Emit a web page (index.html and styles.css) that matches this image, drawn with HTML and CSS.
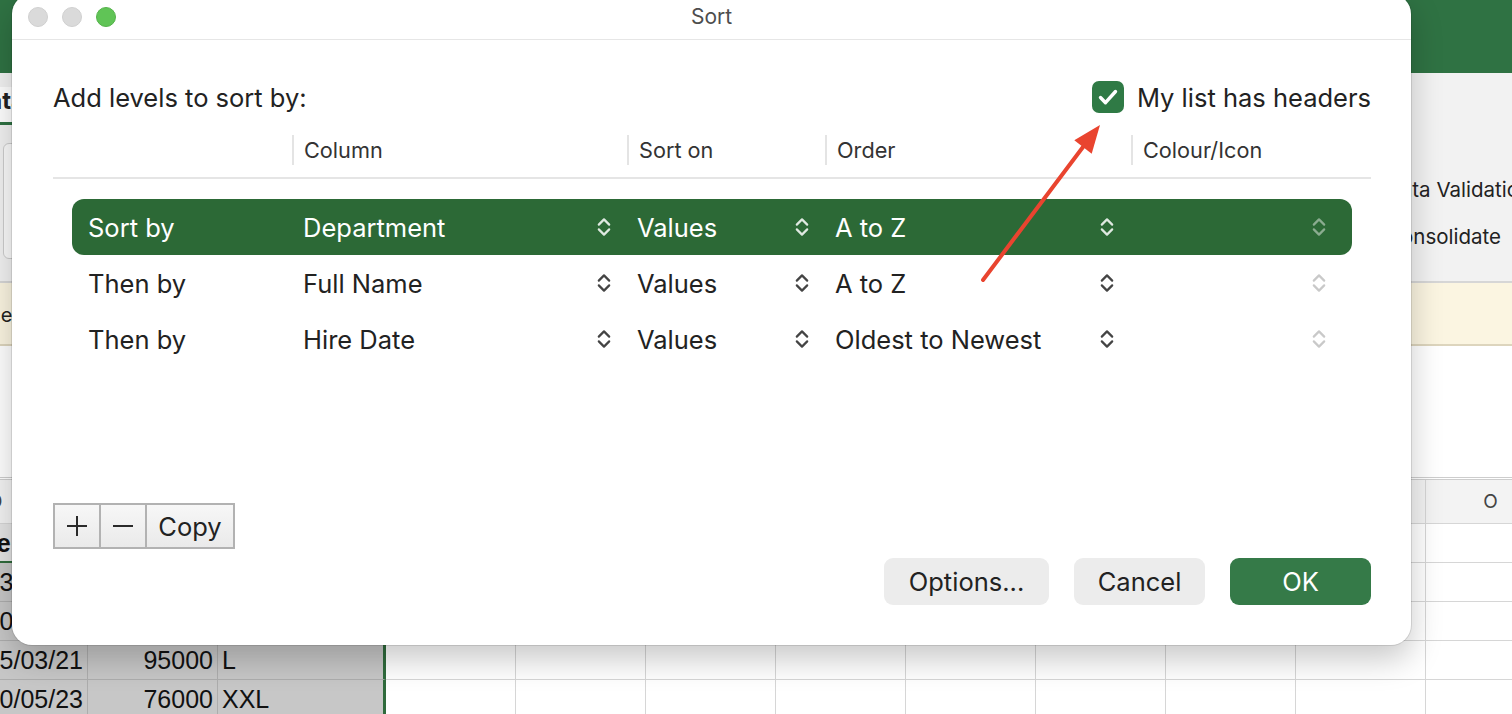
FILE: index.html
```html
<!DOCTYPE html>
<html lang="en">
  <head>
    <meta charset="UTF-8" />
    <meta name="viewport" content="width=device-width, initial-scale=1.0" />
    <title>Sort</title>
    <link rel="stylesheet" href="styles.css">
  </head>
  <body>
    <!-- workbook behind the dialog -->
    <div class="excel">
      <div class="xl-titlebar"></div>
      <div class="xl-tabs"><span class="xl-tab">Data</span></div>
      <div class="xl-ribbon">
        <div class="xl-gallery"></div>
        <div class="xl-group">
          <span>Data Validation</span>
          <span>Consolidate</span>
        </div>
      </div>
      <div class="xl-msgbar"><span>The workbook has links</span></div>
      <div class="xl-formula"></div>
      <div class="xl-sheet">
        <div class="xl-row head">
          <span>D</span><span>E</span><span>F</span><span>G</span><span>H</span><span>I</span>
          <span>J</span><span>K</span><span>L</span><span>M</span><span>N</span><span>O</span>
        </div>
        <div class="xl-row">
          <span class="sel bold under">Hire Date</span><span class="sel bold under">Salary</span><span class="sel bold under edge">Size</span>
          <span></span><span></span><span></span><span></span><span></span><span></span><span></span><span></span><span></span>
        </div>
        <div class="xl-row">
          <span class="sel num">13/06/18</span><span class="sel num">82000</span><span class="sel edge">M</span>
          <span></span><span></span><span></span><span></span><span></span><span></span><span></span><span></span><span></span>
        </div>
        <div class="xl-row">
          <span class="sel num">10/09/19</span><span class="sel num">64000</span><span class="sel edge">S</span>
          <span></span><span></span><span></span><span></span><span></span><span></span><span></span><span></span><span></span>
        </div>
        <div class="xl-row">
          <span class="sel num">15/03/21</span><span class="sel num">95000</span><span class="sel edge">L</span>
          <span></span><span></span><span></span><span></span><span></span><span></span><span></span><span></span><span></span>
        </div>
        <div class="xl-row">
          <span class="sel num">10/05/23</span><span class="sel num">76000</span><span class="sel edge">XXL</span>
          <span></span><span></span><span></span><span></span><span></span><span></span><span></span><span></span><span></span>
        </div>
      </div>
    </div>

    <!-- sort dialog -->
    <div class="dialog">
      <div class="dlg-titlebar">
        <div class="lights">
          <span class="light"></span>
          <span class="light"></span>
          <span class="light zoom"></span>
        </div>
        <div class="dlg-title">Sort</div>
        <div></div>
      </div>

      <div class="dlg-body">
        <div class="dlg-top">
          <span class="dlg-label">Add levels to sort by:</span>
          <label class="check">
            <span class="check-box">
              <svg width="32" height="32" viewBox="0 0 32 32"><path d="M8.5 16.5l5 5.2L23.5 10.5" fill="none" stroke="#fff" stroke-width="3.4" stroke-linecap="round" stroke-linejoin="round"/></svg>
            </span>
            My list has headers
          </label>
        </div>

        <div class="col-heads">
          <span></span>
          <span>Column</span>
          <span>Sort on</span>
          <span>Order</span>
          <span>Colour/Icon</span>
        </div>
        <div class="rule"></div>

        <div class="levels">
          <div class="level active">
            <span class="level-name">Sort by</span>
            <span class="popup">Department <svg class="chev" width="14" height="22" viewBox="0 0 14 22"><path d="M1.8 8.6L7 3.4l5.2 5.2M1.8 13.4L7 18.6l5.2-5.2"/></svg></span>
            <span class="popup">Values <svg class="chev" width="14" height="22" viewBox="0 0 14 22"><path d="M1.8 8.6L7 3.4l5.2 5.2M1.8 13.4L7 18.6l5.2-5.2"/></svg></span>
            <span class="popup order">A to Z <svg class="chev" width="14" height="22" viewBox="0 0 14 22"><path d="M1.8 8.6L7 3.4l5.2 5.2M1.8 13.4L7 18.6l5.2-5.2"/></svg></span>
            <span class="popup dim"><svg class="chev" width="14" height="22" viewBox="0 0 14 22"><path d="M1.8 8.6L7 3.4l5.2 5.2M1.8 13.4L7 18.6l5.2-5.2"/></svg></span>
          </div>
          <div class="level">
            <span class="level-name">Then by</span>
            <span class="popup">Full Name <svg class="chev" width="14" height="22" viewBox="0 0 14 22"><path d="M1.8 8.6L7 3.4l5.2 5.2M1.8 13.4L7 18.6l5.2-5.2"/></svg></span>
            <span class="popup">Values <svg class="chev" width="14" height="22" viewBox="0 0 14 22"><path d="M1.8 8.6L7 3.4l5.2 5.2M1.8 13.4L7 18.6l5.2-5.2"/></svg></span>
            <span class="popup order">A to Z <svg class="chev" width="14" height="22" viewBox="0 0 14 22"><path d="M1.8 8.6L7 3.4l5.2 5.2M1.8 13.4L7 18.6l5.2-5.2"/></svg></span>
            <span class="popup dim"><svg class="chev" width="14" height="22" viewBox="0 0 14 22"><path d="M1.8 8.6L7 3.4l5.2 5.2M1.8 13.4L7 18.6l5.2-5.2"/></svg></span>
          </div>
          <div class="level">
            <span class="level-name">Then by</span>
            <span class="popup">Hire Date <svg class="chev" width="14" height="22" viewBox="0 0 14 22"><path d="M1.8 8.6L7 3.4l5.2 5.2M1.8 13.4L7 18.6l5.2-5.2"/></svg></span>
            <span class="popup">Values <svg class="chev" width="14" height="22" viewBox="0 0 14 22"><path d="M1.8 8.6L7 3.4l5.2 5.2M1.8 13.4L7 18.6l5.2-5.2"/></svg></span>
            <span class="popup order">Oldest to Newest <svg class="chev" width="14" height="22" viewBox="0 0 14 22"><path d="M1.8 8.6L7 3.4l5.2 5.2M1.8 13.4L7 18.6l5.2-5.2"/></svg></span>
            <span class="popup dim"><svg class="chev" width="14" height="22" viewBox="0 0 14 22"><path d="M1.8 8.6L7 3.4l5.2 5.2M1.8 13.4L7 18.6l5.2-5.2"/></svg></span>
          </div>
        </div>

        <div class="dlg-footer">
          <div class="seg">
            <button class="seg-btn plus"><svg width="22" height="22" viewBox="0 0 22 22"><path d="M11 1v20M1 11h20" stroke="#2a2a2a" stroke-width="2"/></svg></button>
            <button class="seg-btn minus"><svg width="22" height="22" viewBox="0 0 22 22"><path d="M1 11h20" stroke="#2a2a2a" stroke-width="2"/></svg></button>
            <button class="seg-btn copy">Copy</button>
          </div>
          <div class="actions">
            <button class="btn options">Options...</button>
            <button class="btn cancel">Cancel</button>
            <button class="btn ok">OK</button>
          </div>
        </div>
      </div>
    </div>

    <!-- red annotation arrow -->
    <svg class="arrow" width="140" height="180" viewBox="0 0 140 180">
      <line x1="13" y1="165" x2="113" y2="32" stroke="#e9442f" stroke-width="4" stroke-linecap="round"/>
      <polygon points="130,10 121.7,38.7 104.3,25.3" fill="#e9442f"/>
    </svg>
  </body>
</html>
```

FILE: styles.css
```css
* {
  box-sizing: border-box;
}
body {
  margin: 0;
  width: 1512px;
  height: 714px;
  overflow: hidden;
  position: relative;
  font-family: Inter, "Noto Sans", sans-serif;
  color: #222;
  background: #fff;
}
button {
  font-family: inherit;
}

/* workbook */
.excel {
  height: 714px;
  display: flex;
  flex-direction: column;
}
.xl-titlebar {
  flex: none;
  height: 73px;
  background: #2f7243;
}
.xl-tabs {
  flex: none;
  height: 57px;
  padding-top: 14px;
  background: #f2f2f2;
}
.xl-tab {
  display: inline-block;
  margin-left: -29px;
  font-size: 24px;
  font-weight: 700;
  line-height: 28px;
  padding-bottom: 7px;
  background: #fff;
  border-bottom: 3px solid #2f7243;
}
.xl-ribbon {
  flex: none;
  height: 153px;
  display: grid;
  grid-template-columns: 1386px 1fr;
  background: #f2f2f2;
  border-bottom: 2px solid #d6d6d6;
}
.xl-gallery {
  margin: 13px 0 0 3px;
  width: 80px;
  height: 116px;
  background: #fbfbfb;
  border: 1px solid #cdcdcd;
  border-radius: 6px;
}
.xl-group {
  display: flex;
  flex-direction: column;
  gap: 21px;
  padding-top: 47px;
  font-size: 20.5px;
  line-height: 26px;
  white-space: nowrap;
}
.xl-msgbar {
  flex: none;
  height: 63px;
  padding-top: 20px;
  background: #fbf5e1;
  border-bottom: 2px solid #ddd5bd;
  font-size: 20px;
  line-height: 24px;
  text-indent: -24px;
  white-space: nowrap;
}
.xl-formula {
  flex: none;
  height: 134px;
  background: #fff;
  border-bottom: 3px double #cdcdcd;
}
.xl-sheet {
  flex: 1;
  overflow: hidden;
  margin-left: -96px;
}
.xl-row {
  display: grid;
  grid-template-columns: 184px 130px 168px repeat(9, 130px);
  height: 39px;
}
.xl-row span {
  border-right: 1px solid #d6d6d6;
  border-bottom: 1px solid #d6d6d6;
  padding: 0 4px;
  font-family: "Liberation Sans", Arial, sans-serif;
  font-size: 25px;
  line-height: 38px;
  color: #111;
  white-space: nowrap;
  overflow: hidden;
}
.xl-row.head {
  height: 44px;
  background: #f3f3f3;
}
.xl-row.head span {
  text-align: center;
  font-family: Inter, sans-serif;
  font-size: 19px;
  line-height: 43px;
  color: #444;
}
.xl-row .sel {
  background: #c7c7c7;
  border-color: #adadad;
}
.xl-row .sel.edge {
  border-right: 3px solid #2f6b3c;
}
.xl-row .bold {
  font-weight: 700;
  background: #e4e4e4;
  text-indent: -7px;
}
.xl-row .under {
  border-bottom: 2px solid #2f6b3c;
}
.xl-row .num {
  text-align: right;
}

/* dialog window */
.dialog {
  position: absolute;
  left: 12px;
  top: -6px;
  width: 1399px;
  height: 651px;
  display: flex;
  flex-direction: column;
  background: #fff;
  border-radius: 20px;
  box-shadow: 0 14px 32px rgba(0, 0, 0, 0.22), 0 0 0 1px rgba(0, 0, 0, 0.1);
}
.dlg-titlebar {
  flex: none;
  height: 46px;
  display: grid;
  grid-template-columns: 1fr auto 1fr;
  align-items: center;
  border-bottom: 1px solid #e6e6e6;
}
.lights {
  display: flex;
  gap: 14px;
  padding-left: 16px;
}
.light {
  width: 20px;
  height: 20px;
  border-radius: 50%;
  background: #dadada;
  border: 1px solid #d0d0d0;
}
.light.zoom {
  background: #60c456;
  border-color: #55b34b;
}
.dlg-title {
  font-size: 21px;
  color: #4d4d4d;
}
.dlg-body {
  flex: 1;
  display: flex;
  flex-direction: column;
  padding: 0 40px 40px 41px;
}
.dlg-top {
  margin-top: 41px;
  height: 32px;
  display: flex;
  justify-content: space-between;
  align-items: center;
}
.dlg-label {
  font-size: 25.5px;
}
.check {
  display: flex;
  align-items: center;
  gap: 13px;
  font-size: 25.5px;
}
.check-box {
  width: 32px;
  height: 32px;
  border-radius: 7px;
  background: #2f7a45;
}
.check-box svg {
  display: block;
}
.col-heads {
  margin-top: 22px;
  height: 30px;
  display: grid;
  grid-template-columns: 239px 335px 198px 306px 1fr;
  font-size: 21.7px;
  line-height: 30px;
  color: #333;
}
.col-heads span + span {
  border-left: 2px solid #e4e4e4;
  padding-left: 10px;
}
.rule {
  margin-top: 12px;
  height: 2px;
  background: #e5e5e5;
}
.levels {
  margin: 20px 19px 0;
}
.level {
  height: 56px;
  display: grid;
  grid-template-columns: 231px 334px 198px 305px 1fr;
  align-items: center;
  font-size: 25.5px;
  color: #222;
  border-radius: 12px;
}
.level.active {
  background: #2c6936;
  color: #fff;
}
.level-name {
  padding-left: 16px;
}
.popup {
  display: flex;
  align-items: center;
  padding-right: 26px;
}
.chev {
  margin-left: auto;
  fill: none;
  stroke: #444;
  stroke-width: 2.2;
  stroke-linecap: round;
  stroke-linejoin: round;
}
.level.active .chev {
  stroke: #dfe9e1;
}
.popup.dim .chev {
  stroke: #c9c9c9;
}
.level.active .popup.dim .chev {
  stroke: rgba(255, 255, 255, 0.45);
}
.dlg-footer {
  margin-top: auto;
  height: 102px;
  display: flex;
  justify-content: space-between;
}
.seg {
  align-self: flex-start;
  display: flex;
  width: 182px;
  height: 46px;
  border: 2px solid #b2b2b2;
  background: linear-gradient(#f7f7f7, #eaeaea);
}
.seg-btn {
  border: none;
  background: none;
  padding: 0;
  display: flex;
  align-items: center;
  justify-content: center;
  font-size: 25.5px;
  color: #222;
}
.seg-btn.plus {
  width: 44px;
}
.seg-btn.minus {
  width: 46px;
  border-left: 2px solid #b2b2b2;
}
.seg-btn.copy {
  flex: 1;
  border-left: 2px solid #b2b2b2;
}
.actions {
  align-self: flex-end;
  display: flex;
  gap: 25px;
}
.btn {
  height: 47px;
  border: none;
  border-radius: 9px;
  background: #ececec;
  font-size: 25.5px;
  color: #222;
}
.btn.options {
  width: 165px;
}
.btn.cancel {
  width: 131px;
}
.btn.ok {
  width: 141px;
  background: #357a48;
  color: #fff;
}

/* annotation */
.arrow {
  position: absolute;
  left: 970px;
  top: 115px;
}
```
